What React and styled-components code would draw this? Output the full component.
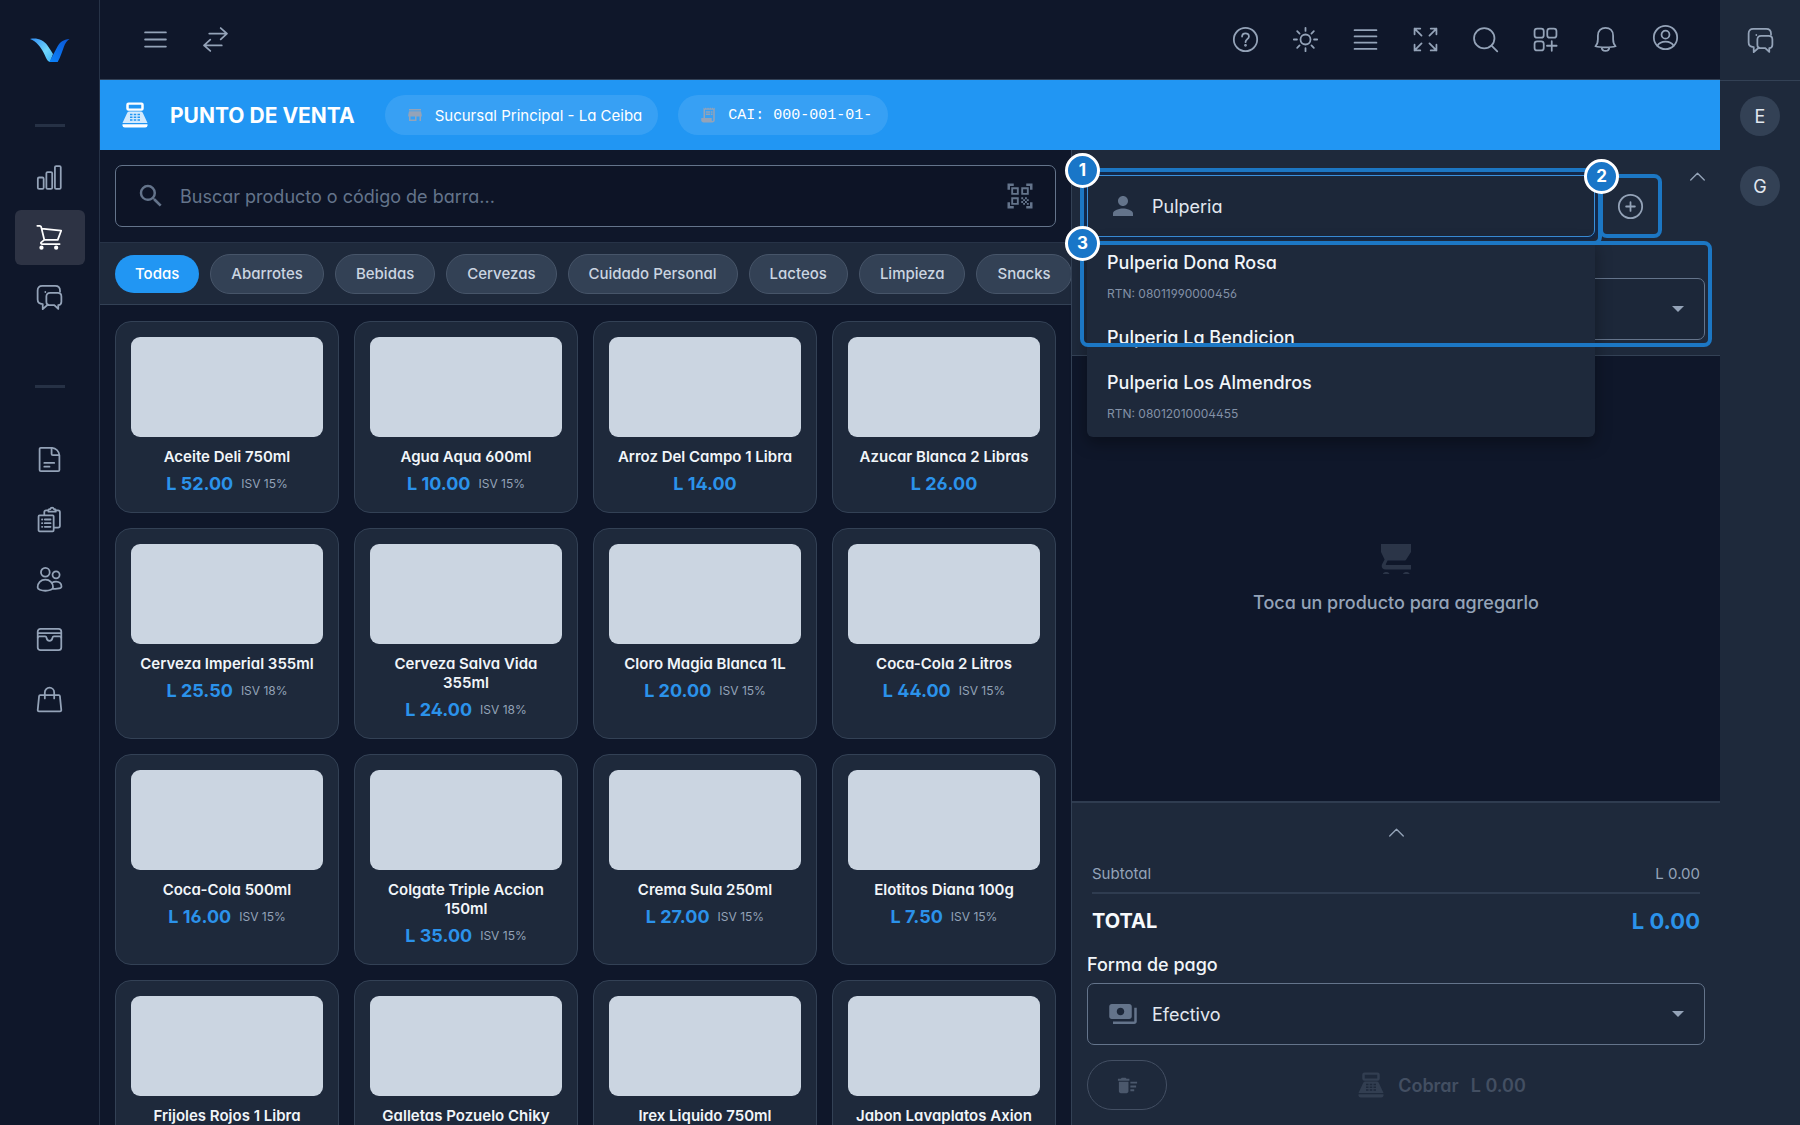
import React, { useState } from "react";
import styled, { createGlobalStyle, css } from "styled-components";

const GlobalStyle = createGlobalStyle`
  *,
  *::before,
  *::after {
    box-sizing: border-box;
  }
  body {
    margin: 0;
    background: #0f172a;
    color: #f1f5f9;
    font-family: Inter, "Liberation Sans", sans-serif;
    font-feature-settings: "cv02", "cv03", "cv04", "cv11";
    font-size: 18px;
    line-height: 27px;
  }
  button,
  input,
  select {
    font: inherit;
    font-feature-settings: inherit;
    color: inherit;
  }
  button {
    border: 0;
    padding: 0;
    background: none;
    cursor: pointer;
  }
`;

const Shell = styled.div`
  display: flex;
  height: 100vh;
  overflow: hidden;
`;

const Sidebar = styled.nav`
  flex: 0 0 100px;
  display: flex;
  flex-direction: column;
  align-items: center;
  border-right: 1px solid #273347;
`;

const LogoLink = styled.a`
  display: flex;
  padding: 37px 0 0;
`;

const SideDivider = styled.hr`
  width: 30px;
  height: 3px;
  margin: ${(p) => (p.$first ? "59px 0 23px" : "55px 0 44px")};
  border: 0;
  background: #263145;
`;

const NavItem = styled.a`
  flex: none;
  display: grid;
  place-items: center;
  width: 70px;
  height: 55px;
  margin-bottom: 5px;
  border-radius: 6px;
  color: ${(p) => (p.$active ? "#ffffff" : "#94a3b8")};
  background: ${(p) => (p.$active ? "#2d3344" : "transparent")};
`;

const Main = styled.div`
  flex: 1;
  min-width: 0;
  display: flex;
  flex-direction: column;
`;

const TopBar = styled.header`
  flex: none;
  display: flex;
  justify-content: space-between;
  align-items: center;
  height: 80px;
  padding: 0 25px;
  border-bottom: 1px solid #334155;
`;

const IconGroup = styled.div`
  display: flex;
`;

const IconButton = styled.button`
  display: grid;
  place-items: center;
  width: 60px;
  height: 60px;
  color: #94a3b8;
  padding-bottom: ${(p) => (p.$raised ? "4px" : "0")};
`;

const Banner = styled.div`
  flex: none;
  display: flex;
  align-items: center;
  gap: 20px;
  height: 70px;
  padding: 0 20px;
  background: #2196f3;
`;

const BannerTitle = styled.h1`
  display: flex;
  align-items: center;
  gap: 20px;
  margin: 0 10px 0 0;
  font-size: 21px;
  font-weight: 700;
  color: #ffffff;
`;

const Pill = styled.span`
  display: flex;
  align-items: center;
  gap: 11px;
  height: 40px;
  padding: 0 16px 0 21px;
  border-radius: 20px;
  background: rgba(255, 255, 255, 0.1);
  color: #ffffff;
  font-size: 15px;
  font-family: ${(p) =>
    p.$mono ? '"Liberation Mono", monospace' : "inherit"};
  svg {
    color: #94a3b8;
  }
`;

const Workspace = styled.div`
  flex: 1;
  min-height: 0;
  display: grid;
  grid-template-columns: 3fr 2fr;
`;

const Catalog = styled.section`
  display: flex;
  flex-direction: column;
  min-width: 0;
  min-height: 0;
  border-right: 1px solid #334155;
`;

const Field = styled.label`
  position: relative;
  display: flex;
  align-items: center;
  gap: 14px;
  height: 62px;
  padding: 0 20px;
  border: 1px solid #64748b;
  border-radius: 7px;
  background: ${(p) => (p.$dark ? "#0d1426" : "#1c2739")};
  color: #64748b;
  ${(p) =>
    p.$dark &&
    css`
      flex: none;
      margin: 15px;
    `}
  ${(p) =>
    p.$focused &&
    css`
      border-color: #3a8fdb;
      box-shadow: 0 0 0 3px #13294a;
    `}
`;

const TextInput = styled.input`
  flex: 1;
  min-width: 0;
  height: 27px;
  padding: 0;
  border: 0;
  outline: 0;
  background: none;
  color: #e2e8f0;
  &::placeholder {
    color: #64748b;
    opacity: 1;
  }
`;

const Select = styled.select`
  flex: 1;
  min-width: 0;
  padding: 0;
  border: 0;
  outline: 0;
  appearance: none;
  background: none;
  color: #e2e8f0;
`;

const Caret = styled.span`
  width: 0;
  height: 0;
  border: 6px solid transparent;
  border-top-color: #94a3b8;
  border-bottom: 0;
`;

const ChipBar = styled.div`
  flex: none;
  display: flex;
  align-items: center;
  gap: 11px;
  height: 63px;
  padding: 0 15px;
  overflow: hidden;
  border-top: 1px solid #273347;
  border-bottom: 1px solid #334155;
  background: #1e293b;
`;

const Chip = styled.button`
  flex: none;
  height: 40px;
  padding: 0 20px;
  border: 1px solid #475569;
  border-radius: 20px;
  background: #334155;
  color: #cbd5e1;
  font-size: 15px;
  font-weight: 500;
  ${(p) =>
    p.$active &&
    css`
      height: 38px;
      border: 0;
      background: #2196f3;
      color: #ffffff;
    `}
`;

const ProductGrid = styled.div`
  flex: 1;
  min-height: 0;
  display: grid;
  grid-template-columns: repeat(4, 1fr);
  grid-auto-rows: max-content;
  gap: 15px;
  padding: 16px 15px 15px;
  overflow: hidden;
`;

const Card = styled.button`
  display: flex;
  flex-direction: column;
  align-items: stretch;
  padding: 15px;
  border: 1px solid #334155;
  border-radius: 16px;
  background: #1e293b;
  text-align: center;
`;

const Thumb = styled.span`
  height: 100px;
  border-radius: 9px;
  background: #cbd5e1;
`;

const ProductName = styled.span`
  margin: 10px 0 4px;
  color: #f1f5f9;
  font-size: 15px;
  font-weight: 600;
  line-height: 19px;
`;

const PriceLine = styled.span`
  display: flex;
  justify-content: center;
  align-items: center;
  gap: 8px;
  height: 27px;
`;

const Price = styled.b`
  color: #2b92ea;
  font-weight: 700;
`;

const Tax = styled.small`
  color: #94a3b8;
  font-size: 12px;
`;

const CartPanel = styled.aside`
  display: flex;
  flex-direction: column;
  min-width: 0;
  min-height: 0;
`;

const CustomerBox = styled.div`
  display: flex;
  flex-direction: column;
  gap: 41px;
  padding: 25px 15px 15px;
  border-bottom: 1px solid #334155;
  background: #1e293b;
`;

const CustomerRow = styled.div`
  display: flex;
  align-items: flex-start;
`;

const CustomerSearch = styled.div`
  position: relative;
  flex: 1;
`;

const AddCustomer = styled.button`
  position: relative;
  display: grid;
  place-items: center;
  width: 70px;
  height: 62px;
  margin-right: 20px;
  color: #94a3b8;
`;

const Collapse = styled.button`
  display: grid;
  place-items: center;
  width: 20px;
  height: 20px;
  margin-top: -11px;
  color: #94a3b8;
  ${(p) =>
    p.$wide &&
    css`
      width: 60px;
      height: 58px;
      margin: 0 auto;
    `}
`;

const Options = styled.ul`
  position: absolute;
  z-index: 2;
  top: 65px;
  left: 0;
  right: 0;
  margin: 0;
  padding: 0 0 2px;
  border-radius: 0 0 6px 6px;
  background: #1e293b;
  box-shadow: 0 6px 16px rgba(0, 0, 0, 0.35);
  list-style: none;
`;

const Option = styled.li`
  padding: 9px 20px;
  color: #f1f5f9;
  font-weight: 500;
`;

const OptionNote = styled.small`
  display: block;
  margin: 9px 0 4px;
  color: #8391a7;
  font-size: 12px;
  font-weight: 400;
  line-height: 17px;
`;

// numbered tour frames, drawn over the control they explain
const Frame = styled.span`
  position: absolute;
  z-index: 3;
  inset: ${(p) => p.$inset};
  border: 4px solid #1c77c4;
  border-radius: 8px;
  pointer-events: none;
`;

const Badge = styled.b`
  position: absolute;
  top: -19px;
  left: -19px;
  display: grid;
  place-items: center;
  width: 35px;
  height: 35px;
  border: 3px solid #ffffff;
  border-radius: 50%;
  background: #1976c8;
  color: #ffffff;
  font-size: 17px;
  font-weight: 700;
`;

const TourAnchor = styled.div`
  position: relative;
`;

const EmptyCart = styled.div`
  flex: 1;
  display: flex;
  flex-direction: column;
  align-items: center;
  justify-content: center;
  gap: 15px;
  padding-top: 3px;
  color: #94a3b8;
  font-weight: 500;
  svg {
    color: #2b3548;
  }
`;

const Summary = styled.div`
  display: flex;
  flex-direction: column;
  padding: 0 15px 15px;
  border-top: 2px solid #2f3c50;
  background: #1e293b;
`;

const SummaryRow = styled.div`
  display: flex;
  justify-content: space-between;
  align-items: center;
  height: ${(p) => (p.$total ? "55px" : "33px")};
  margin: 0 5px;
  font-size: ${(p) => (p.$total ? "20px" : "15px")};
  font-weight: ${(p) => (p.$total ? 700 : 400)};
  color: ${(p) => (p.$total ? "#f8fafc" : "#94a3b8")};
  ${(p) =>
    !p.$total &&
    css`
      padding-bottom: 6px;
      border-bottom: 2px solid #2f3c50;
    `}
`;

const TotalAmount = styled.span`
  color: #2b92ea;
  font-size: 22px;
`;

const FieldLabel = styled.label`
  margin: 2px 0 5px;
  color: #f1f5f9;
  font-weight: 500;
`;

const Actions = styled.div`
  display: flex;
  gap: 15px;
  margin-top: 15px;
`;

const ClearButton = styled.button`
  display: grid;
  place-items: center;
  width: 80px;
  height: 50px;
  border: 1px solid #434f63;
  border-radius: 25px;
  color: #4b586c;
`;

const PayButton = styled.button`
  flex: 1;
  display: flex;
  justify-content: center;
  align-items: center;
  gap: 12px;
  height: 50px;
  padding-right: 5px;
  color: #434f62;
  font-weight: 600;
  svg {
    color: #323e51;
  }
`;

const ChatRail = styled.aside`
  flex: 0 0 80px;
  display: flex;
  flex-direction: column;
  align-items: center;
  background: #1e293b;
`;

const ChatToggle = styled.button`
  display: grid;
  place-items: center;
  width: 100%;
  height: 81px;
  margin-bottom: 15px;
  border-bottom: 1px solid #334155;
  color: #94a3b8;
`;

const Avatar = styled.button`
  width: 40px;
  height: 40px;
  margin-bottom: 30px;
  border-radius: 50%;
  background: #334155;
  color: #e2e8f0;
`;

// line icons on a 24 unit grid
const LINE_ICONS = {
  chart: (
    <>
      <rect x="0.8" y="12" width="5.6" height="11" rx="1.2" />
      <rect x="9" y="6.8" width="5.6" height="16.2" rx="1.2" />
      <rect x="17.2" y="1" width="5.6" height="22" rx="1.2" />
    </>
  ),
  cart: (
    <>
      <path d="M.3.8h2.4c.7 0 1.1.4 1.3 1l3 12.4M4.4 3.4l18.8 2.1-3.3 8.8H7l-3 2.4c-.6.6-.2 1.6.7 1.6h17" />
      <circle cx="4.3" cy="21.8" r="1.2" fill="currentColor" />
      <circle cx="18.4" cy="21.8" r="1.2" fill="currentColor" />
    </>
  ),
  chat: (
    <>
      <path d="M8 6.8v-.2M5.500 18.300v4.900L10.500 18.700M5.500 18.300C2 18.300.6 16.800.6 14V5.200C.6 2.300 2.200.9 5 .9h12.500c2.800 0 4.600 1.500 4.600 4.500v1" />
      <path d="M12.500 7.600h7.500c2.200 0 3.400 1.200 3.400 3.400v5c0 2-1 3.200-3 3.400v3.600l-3.800-3.600h-4.200c-2.200 0-3.400-1.200-3.400-3.400v-5c0-2.200 1.200-3.400 3.500-3.400z" />
    </>
  ),
  file: (
    <>
      <path d="M14.500.8H3.700c-.8 0-1.200.4-1.200 1.200v20c0 .8.4 1.200 1.200 1.200h16.600c.8 0 1.200-.4 1.200-1.200V8C21 4 18 1.200 14.500.8z" />
      <path d="M14 .8v5.800c0 .8.400 1.200 1.200 1.200h6M7 15.300h9.500M7 18.900h5" />
    </>
  ),
  clipboard: (
    <>
      <rect x="1.500" y="8" width="14.500" height="15.300" rx="1" />
      <path d="M7 7.500V5c0-1.200.6-1.800 1.800-1.800h2M17.500 3.200h2.700c1.200 0 1.800.6 1.800 1.800v13c0 1.200-.6 1.800-1.800 1.800h-3.800M11 4.500V3c0-.6.400-1 1-1h.8c.4-1.800 3-1.800 3.400 0h.8c.6 0 1 .4 1 1v1.500zM4.800 12h.3M7.500 12h5.500M4.800 15.500h.3M7.500 15.500h5.500M4.800 19h.3M7.500 19h5.500" />
    </>
  ),
  users: (
    <>
      <circle cx="8" cy="5" r="4.200" />
      <circle cx="18.300" cy="7.500" r="3.400" />
      <path d="M.6 19.500c0-4.200 3-7.300 7.400-7.300s7.400 3.100 7.400 7.300c0 1.400-.8 1.900-2 2.300-3.200 1.200-7.500 1.200-10.800 0-1.200-.4-2-.9-2-2.300zM14.600 15c1-.7 2.200-1 3.700-1 3.200 0 5.200 2.100 5.200 4.600 0 2-4 2.600-7.800 2.300" />
    </>
  ),
  wallet: (
    <>
      <rect x="0.700" y="1.800" width="22.600" height="20.400" rx="2.600" />
      <path d="M.7 5.800h22.600M.7 10.300c0-.8.6-1.200 1.500-1.200h5.600c.8 0 1.200.5 1.300 1.200.6 4 5.200 4 5.800 0 .1-.7.500-1.200 1.300-1.200h5.600c.9 0 1.500.4 1.500 1.200" />
    </>
  ),
  bag: (
    <>
      <path d="M3 7.800h18c.6 0 .9.3 1 .9l1.300 13.200c.1.900-.3 1.400-1.200 1.400H1.900c-.9 0-1.300-.5-1.200-1.400L2 8.700c.1-.6.400-.9 1-.9z" />
      <path d="M7.500 11V5.200a4.500 4.500 0 0 1 9 0V11" />
    </>
  ),
  menu: <path d="M2 5.200h20M2 12h20M2 18.800h20" />,
  swap: (
    <path d="M6 6.300h17M17 1l6 5.300-6 5.500M18 17.700H1M7 12.200l-6 5.500L7 23" />
  ),
  help: (
    <>
      <circle cx="12" cy="12" r="11.200" />
      <path d="M8.700 9.200c0-4.200 6.600-4.200 6.600-.2 0 2.600-3.200 2.800-3.300 5.500" />
      <circle cx="12" cy="17.600" r="0.500" fill="currentColor" />
    </>
  ),
  sun: (
    <>
      <circle cx="12" cy="12" r="4.800" />
      <path d="M12 .8v3M12 20.200v3M.8 12h3M20.200 12h3M4 4l2.300 2.300M17.700 17.700L20 20M4 20l2.300-2.300M17.700 6.300L20 4" />
    </>
  ),
  rows: <path d="M1.500 3h21M1.500 9h21M1.500 15h21M1.500 21h21" />,
  expand: (
    <path d="M1.500 7V1.500H7M1.500 1.500l6.700 6.700M17 1.500h5.500V7M22.500 1.500l-6.700 6.700M1.500 17v5.500H7M1.500 22.500l6.700-6.700M22.500 17v5.500H17M22.500 22.500l-6.700-6.700" />
  ),
  search: (
    <>
      <circle cx="10.800" cy="10.800" r="9.800" />
      <path d="M17.800 17.800l5.500 5.500" />
    </>
  ),
  apps: (
    <>
      <rect x="1.500" y="1.500" width="8.800" height="8.800" rx="2.400" />
      <rect x="13.700" y="1.500" width="8.800" height="8.800" rx="2.400" />
      <rect x="1.500" y="13.700" width="8.800" height="8.800" rx="2.400" />
      <path d="M18 13.500v9.300M13.400 18h9.300" />
    </>
  ),
  bell: (
    <path d="M2.300 18.500c1.700-1.700 2.400-3.700 2.400-6.700V8.300c0-4.500 3-7.500 7.300-7.500s7.300 3 7.300 7.500v3.500c0 3 .7 5 2.400 6.700-4.300 1.300-15.100 1.300-19.400 0zM8.300 19.500c.2 4.700 7.200 4.700 7.400 0" />
  ),
  user: (
    <>
      <circle cx="12" cy="12" r="11.200" />
      <circle cx="12" cy="9.300" r="3.800" />
      <path d="M4.300 19.800c2.800-5.200 12.600-5.200 15.400 0" />
    </>
  ),
  plus: (
    <>
      <circle cx="12" cy="12" r="11.200" />
      <path d="M12 7.800v8.400M7.800 12h8.400" />
    </>
  ),
  chevron: <path d="M5.500 15.400L12 8.800l6.500 6.600" />,
};

function LineIcon({ name, size = 25, weight = 1.7 }) {
  return (
    <svg
      width={size}
      height={size}
      viewBox="0 0 24 24"
      fill="none"
      stroke="currentColor"
      strokeWidth={weight}
      strokeLinecap="round"
      strokeLinejoin="round"
      overflow="visible"
      aria-hidden="true"
    >
      {LINE_ICONS[name]}
    </svg>
  );
}

const SOLID_ICONS = {
  search:
    "M15.500 14h-.79l-.28-.27A6.471 6.471 0 0 0 16 9.500 6.500 6.500 0 1 0 9.500 16c1.610 0 3.090-.59 4.230-1.570l.27.28v.79l5 4.990L20.490 19l-4.990-5zm-6 0C7.010 14 5 11.990 5 9.500S7.010 5 9.500 5 14 7.010 14 9.500 11.990 14 9.500 14z",
  person:
    "M12 12c2.210 0 4-1.790 4-4s-1.790-4-4-4-4 1.790-4 4 1.790 4 4 4zm0 2c-2.670 0-8 1.340-8 4v2h16v-2c0-2.660-5.330-4-8-4z",
  payments:
    "M19 14V6c0-1.100-.9-2-2-2H3c-1.100 0-2 .9-2 2v8c0 1.100.9 2 2 2h14c1.100 0 2-.9 2-2zm-9-1c-1.660 0-3-1.340-3-3s1.340-3 3-3 3 1.340 3 3-1.340 3-3 3zm13-6v11c0 1.100-.9 2-2 2H4v-2h17V7h2z",
  store:
    "M20 4H4v2h16V4zm1 10v-2l-1-5H4l-1 5v2h1v6h10v-6h4v6h2v-6h1zm-9 4H6v-4h6v4z",
  receipt:
    "M19.500 3.500L18 2l-1.500 1.500L15 2l-1.500 1.500L12 2l-1.500 1.500L9 2 7.500 3.500 6 2v14H3v3c0 1.660 1.340 3 3 3h12c1.660 0 3-1.340 3-3V2l-1.500 1.500zM19 19c0 .55-.45 1-1 1s-1-.45-1-1v-3H8V5h11v14zM9 7h6v2H9zm7 0h2v2h-2zM9 10h6v2H9zm7 0h2v2h-2z",
  sweep:
    "M15 16h4v2h-4zm0-8h7v2h-7zm0 4h6v2h-6zM3 18c0 1.100.9 2 2 2h6c1.100 0 2-.9 2-2V8H3v10zM14 5h-3l-1-1H6L5 5H2v2h12z",
  scan: "M9.500 6.500v3h-3v-3h3M11 5H5v6h6V5zm-1.500 9.500v3h-3v-3h3M11 13H5v6h6v-6zm6.500-6.500v3h-3v-3h3M19 5h-6v6h6V5zm-6 8h1.500v1.500H13V13zm1.500 1.500H16V16h-1.500v-1.500zM16 13h1.500v1.500H16V13zm-3 3h1.500v1.500H13V16zm1.500 1.500H16V19h-1.500v-1.500zM16 16h1.500v1.500H16V16zm1.500-1.500H19V16h-1.500v-1.500zm0 3H19V19h-1.500v-1.500zM22 7h-2V4h-3V2h5v5zm0 15v-5h-2v3h-3v2h5zM2 22h5v-2H4v-3H2v5zM2 2v5h2V4h3V2H2z",
};

function SolidIcon({ name, size = 30 }) {
  return (
    <svg
      width={size}
      height={size}
      viewBox="0 0 24 24"
      fill="currentColor"
      aria-hidden="true"
    >
      <path d={SOLID_ICONS[name]} />
    </svg>
  );
}

function RegisterIcon({ size = 30, body = "currentColor" }) {
  return (
    <svg
      width={size}
      height={size}
      viewBox="0 0 24 24"
      fill="currentColor"
      aria-hidden="true"
    >
      <path
        fillRule="evenodd"
        d="M6.800 2h10.400A1.800 1.800 0 0 1 19 3.800v2.900a1.800 1.800 0 0 1-1.800 1.800H6.800A1.800 1.800 0 0 1 5 6.700V3.800A1.800 1.800 0 0 1 6.800 2zm.2 1.800v2.900h10V3.800z"
      />
      <path
        fill={body}
        fillRule="evenodd"
        d="M7.500 9.200h9c.8 0 1.400.4 1.800 1.200L22 18.400H2l3.700-8c.4-.8 1-1.200 1.800-1.200zM8 11v1.200h2V11zm3 0v1.200h2V11zm3 0v1.200h2V11zm-6 2.200v1.200h2v-1.200zm3 0v1.200h2v-1.200zm3 0v1.200h2v-1.200zm-6 2.200v1.200h2v-1.200zm3 0v1.200h2v-1.200zm3 0v1.200h2v-1.200z"
      />
      <path d="M2 19.300h20v.9a1.800 1.800 0 0 1-1.800 1.800H3.800A1.800 1.800 0 0 1 2 20.200z" />
    </svg>
  );
}

function Logo() {
  return (
    <svg width="40" height="28" viewBox="0 0 40 28" aria-hidden="true">
      <defs>
        <linearGradient id="wing" x1="0" y1="0" x2="1" y2="1">
          <stop offset="0" stopColor="#2f8df5" />
          <stop offset="0.6" stopColor="#6fd6fb" />
          <stop offset="1" stopColor="#3cb4f7" />
        </linearGradient>
        <linearGradient id="blade" x1="1" y1="0" x2="0" y2="1">
          <stop offset="0" stopColor="#0a55d6" />
          <stop offset="1" stopColor="#0b84fb" />
        </linearGradient>
      </defs>
      <path
        fill="url(#wing)"
        d="M0 2c7-1.500 13.500 1 17.500 6.500 2 2.700 3.800 5.500 5.500 8.500L20 25c-3.500-1-4-5-6.500-9.500C10.300 9.500 6.500 4.500 0 2z"
      />
      <path
        fill="url(#blade)"
        d="M39.500 2c-6 .3-9.600 3.300-12 7.500L19.300 25h8.400c3-5.500 4.500-10.500 6.300-15.500 1.200-3.200 2.800-5.500 5.500-7.500z"
      />
    </svg>
  );
}

function CutCartIcon() {
  return (
    <svg
      width="30"
      height="30"
      viewBox="0 0 30 30"
      fill="currentColor"
      aria-hidden="true"
    >
      <path
        fillRule="evenodd"
        d="M0 0h30v8l-4.600 7.200c-.5.900-1 1.300-2 1.300H6.600L4.900 20c-.2.600 0 1 .6 1H30v4.500H4.500C1.500 25.500-.2 23 1.200 20l2.400-4.600L0 8z"
      />
      <path d="M1.800 30c1-2.600 5.700-2.600 6.700 0zM22 30c1-2.600 5.700-2.600 6.700 0z" />
    </svg>
  );
}

const mainNav = ["chart", "cart", "chat"];
const moreNav = ["file", "clipboard", "users", "wallet", "bag"];

const navLabels = {
  chart: "Reportes",
  cart: "Punto de venta",
  chat: "Mensajes",
  file: "Facturas",
  clipboard: "Inventario",
  users: "Clientes",
  wallet: "Caja",
  bag: "Compras",
};

const tools = [
  ["help", "Ayuda"],
  ["sun", "Tema"],
  ["rows", "Densidad"],
  ["expand", "Pantalla completa"],
  ["search", "Buscar"],
  ["apps", "Aplicaciones"],
  ["bell", "Notificaciones"],
  ["user", "Cuenta"],
];

const categories = [
  "Todas",
  "Abarrotes",
  "Bebidas",
  "Cervezas",
  "Cuidado Personal",
  "Lacteos",
  "Limpieza",
  "Snacks",
];

const products = [
  { name: "Aceite Deli 750ml", price: "52.00", tax: "15%" },
  { name: "Agua Aqua 600ml", price: "10.00", tax: "15%" },
  { name: "Arroz Del Campo 1 Libra", price: "14.00" },
  { name: "Azucar Blanca 2 Libras", price: "26.00" },
  { name: "Cerveza Imperial 355ml", price: "25.50", tax: "18%" },
  { name: "Cerveza Salva Vida 355ml", price: "24.00", tax: "18%" },
  { name: "Cloro Magia Blanca 1L", price: "20.00", tax: "15%" },
  { name: "Coca-Cola 2 Litros", price: "44.00", tax: "15%" },
  { name: "Coca-Cola 500ml", price: "16.00", tax: "15%" },
  { name: "Colgate Triple Accion 150ml", price: "35.00", tax: "15%" },
  { name: "Crema Sula 250ml", price: "27.00", tax: "15%" },
  { name: "Elotitos Diana 100g", price: "7.50", tax: "15%" },
  { name: "Frijoles Rojos 1 Libra" },
  { name: "Galletas Pozuelo Chiky" },
  { name: "Irex Liquido 750ml" },
  { name: "Jabon Lavaplatos Axion" },
];

const customers = [
  { name: "Pulperia Dona Rosa", rtn: "08011990000456" },
  { name: "Pulperia La Bendicion" },
  { name: "Pulperia Los Almendros", rtn: "08012010004455" },
];

function ProductCard({ name, price, tax }) {
  return (
    <Card>
      <Thumb />
      <ProductName>{name}</ProductName>
      <PriceLine>
        {price && <Price>L {price}</Price>}
        {tax && <Tax>ISV {tax}</Tax>}
      </PriceLine>
    </Card>
  );
}

function Cart() {
  const [customer, setCustomer] = useState("Pulperia");

  return (
    <CartPanel>
      <CustomerBox>
        <CustomerRow>
          <CustomerSearch>
            <Field $focused>
              <SolidIcon name="person" />
              <TextInput
                aria-label="Cliente"
                value={customer}
                onChange={(e) => setCustomer(e.target.value)}
              />
            </Field>
            <Options>
              {customers.map((c) => (
                <Option key={c.name}>
                  {c.name}
                  {c.rtn && <OptionNote>RTN: {c.rtn}</OptionNote>}
                </Option>
              ))}
            </Options>
            <Frame $inset="-7px -7px -8px -7px">
              <Badge>1</Badge>
            </Frame>
          </CustomerSearch>
          <AddCustomer aria-label="Agregar cliente">
            <LineIcon name="plus" />
            <Frame $inset="-1px 3px -1px 4px">
              <Badge>2</Badge>
            </Frame>
          </AddCustomer>
          <Collapse aria-label="Contraer cliente">
            <LineIcon name="chevron" weight={1.3} />
          </Collapse>
        </CustomerRow>
        <TourAnchor>
          <Field>
            <Select aria-label="Tipo de documento" />
            <Caret />
          </Field>
          <Frame $inset="-37px -7px -7px -7px">
            <Badge>3</Badge>
          </Frame>
        </TourAnchor>
      </CustomerBox>

      <EmptyCart>
        <CutCartIcon />
        Toca un producto para agregarlo
      </EmptyCart>

      <Summary>
        <Collapse $wide aria-label="Contraer resumen">
          <LineIcon name="chevron" weight={1.3} />
        </Collapse>
        <SummaryRow>
          <span>Subtotal</span>
          <span>L 0.00</span>
        </SummaryRow>
        <SummaryRow $total>
          <span>TOTAL</span>
          <TotalAmount>L 0.00</TotalAmount>
        </SummaryRow>
        <FieldLabel htmlFor="payment">Forma de pago</FieldLabel>
        <Field as="div">
          <SolidIcon name="payments" />
          <Select id="payment">
            <option>Efectivo</option>
          </Select>
          <Caret />
        </Field>
        <Actions>
          <ClearButton aria-label="Vaciar carrito">
            <SolidIcon name="sweep" size={23} />
          </ClearButton>
          <PayButton disabled>
            <RegisterIcon />
            <span>Cobrar</span>
            <span>L 0.00</span>
          </PayButton>
        </Actions>
      </Summary>
    </CartPanel>
  );
}

function App() {
  const [category, setCategory] = useState("Todas");

  return (
    <>
      <GlobalStyle />
      <Shell>
        <Sidebar>
          <LogoLink href="#" aria-label="Inicio">
            <Logo />
          </LogoLink>
          <SideDivider $first />
          {mainNav.map((name) => (
            <NavItem
              key={name}
              href="#"
              aria-label={navLabels[name]}
              $active={name === "cart"}
            >
              <LineIcon name={name} />
            </NavItem>
          ))}
          <SideDivider />
          {moreNav.map((name) => (
            <NavItem key={name} href="#" aria-label={navLabels[name]}>
              <LineIcon name={name} />
            </NavItem>
          ))}
        </Sidebar>

        <Main>
          <TopBar>
            <IconGroup>
              <IconButton aria-label="Menú">
                <LineIcon name="menu" />
              </IconButton>
              <IconButton aria-label="Cambiar">
                <LineIcon name="swap" />
              </IconButton>
            </IconGroup>
            <IconGroup>
              {tools.map(([name, label]) => (
                <IconButton
                  key={name}
                  aria-label={label}
                  $raised={name === "user"}
                >
                  <LineIcon name={name} />
                </IconButton>
              ))}
            </IconGroup>
          </TopBar>

          <Banner>
            <BannerTitle>
              <RegisterIcon body="#d3eafd" />
              PUNTO DE VENTA
            </BannerTitle>
            <Pill>
              <SolidIcon name="store" size={18} />
              Sucursal Principal - La Ceiba
            </Pill>
            <Pill $mono>
              <SolidIcon name="receipt" size={18} />
              CAI: 000-001-01-
            </Pill>
          </Banner>

          <Workspace>
            <Catalog>
              <Field $dark>
                <SolidIcon name="search" />
                <TextInput
                  aria-label="Buscar producto"
                  placeholder="Buscar producto o código de barra..."
                />
                <SolidIcon name="scan" />
              </Field>
              <ChipBar>
                {categories.map((c) => (
                  <Chip
                    key={c}
                    $active={c === category}
                    onClick={() => setCategory(c)}
                  >
                    {c}
                  </Chip>
                ))}
              </ChipBar>
              <ProductGrid>
                {products.map((p) => (
                  <ProductCard key={p.name} {...p} />
                ))}
              </ProductGrid>
            </Catalog>
            <Cart />
          </Workspace>
        </Main>

        <ChatRail>
          <ChatToggle aria-label="Conversaciones">
            <LineIcon name="chat" />
          </ChatToggle>
          <Avatar>E</Avatar>
          <Avatar>G</Avatar>
        </ChatRail>
      </Shell>
    </>
  );
}

export default App;
